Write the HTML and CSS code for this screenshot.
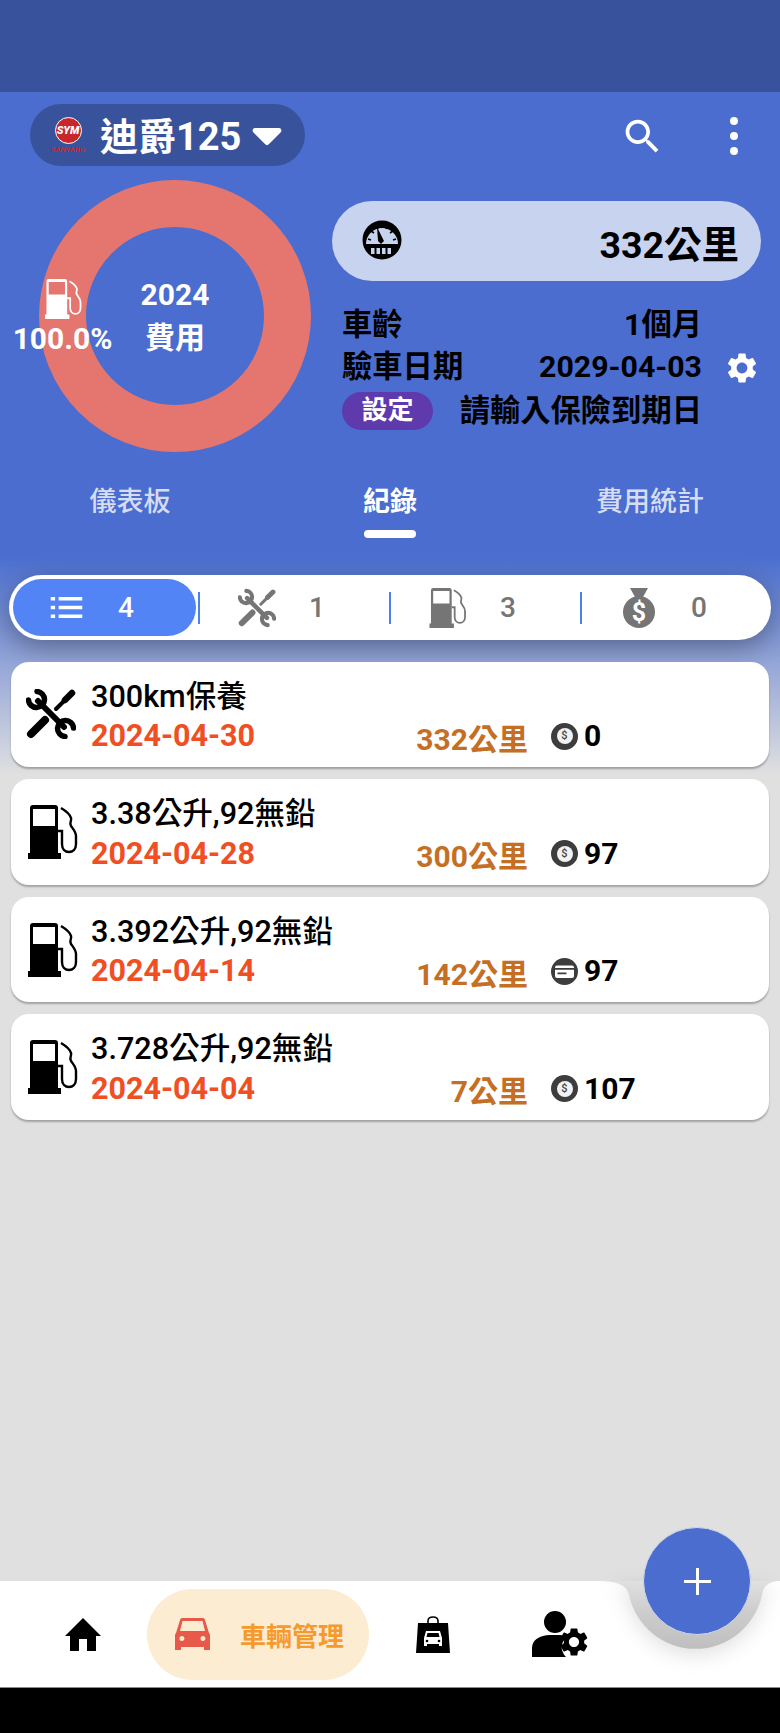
FILE: index.html
```html
<!DOCTYPE html>
<html lang="zh-Hant">
<head>
    <meta charset="utf-8" />
    <title>車輛管理</title>
    <link rel="stylesheet" href="styles.css">
</head>
<body>

<svg class="defs" width="0" height="0">
    <symbol id="i-fuel" viewBox="0 0 50 54">
        <path fill-rule="evenodd" d="M5 0h22a3 3 0 0 1 3 3v45h3v6H0v-6h2V3a3 3 0 0 1 3-3zM5 4v17h22V4z"/>
        <path fill="none" stroke="currentColor" stroke-width="2.4" d="M33 3c5 3 9 6 10 10 1 3-2 4 0 8 2 3 5 6 5 10v8c0 5-3 8-7 8s-7-3-7-8V26h-4"/>
    </symbol>
    <symbol id="i-tools" viewBox="0 0 50 50">
        <g fill="none" stroke="currentColor" stroke-linecap="round">
            <path stroke-width="6" d="M12 12l26 26"/>
            <path stroke-width="5.5" d="M11 2.500A8 8 0 1 1 2.500 11M39 47.500A8 8 0 1 1 47.500 39"/>
            <path stroke-width="8" d="M5 45l14-14"/>
            <path stroke-width="4" d="M30 20l9-9"/>
            <path stroke-width="6.500" d="M39 11l7-7"/>
        </g>
    </symbol>
    <symbol id="i-card" viewBox="0 0 27 27">
        <circle cx="13.500" cy="13.500" r="13.500" fill="#3d3d3d"/>
        <rect x="4" y="7.500" width="19" height="12.500" rx="2" fill="#fff"/>
        <path fill="#3d3d3d" d="M4 10h19v1.800H4zM6.500 14.500h9v1.700h-9z"/>
    </symbol>
    <symbol id="i-gear" viewBox="0 0 24 24">
        <path d="M19.14 12.94c.04-.3.06-.61.06-.94 0-.32-.02-.64-.07-.94l2.03-1.58c.18-.14.23-.41.12-.61l-1.92-3.32c-.12-.22-.37-.29-.59-.22l-2.39.96c-.5-.38-1.03-.7-1.62-.94l-.36-2.54c-.04-.24-.24-.41-.48-.41h-3.84c-.24 0-.43.17-.47.41l-.36 2.54c-.59.24-1.13.57-1.62.94l-2.39-.96c-.22-.08-.47 0-.59.22L2.74 8.87c-.12.21-.08.47.12.61l2.03 1.58c-.05.3-.09.63-.09.94s.02.64.07.94l-2.03 1.58c-.18.14-.23.41-.12.61l1.92 3.32c.12.22.37.29.59.22l2.39-.96c.5.38 1.03.7 1.62.94l.36 2.54c.05.24.24.41.48.41h3.84c.24 0 .44-.17.47-.41l.36-2.54c.59-.24 1.13-.56 1.62-.94l2.39.96c.22.08.47 0 .59-.22l1.92-3.32c.12-.22.07-.47-.12-.61l-2.01-1.58zM12 15.600c-1.980 0-3.600-1.620-3.600-3.600s1.620-3.600 3.600-3.600 3.600 1.620 3.600 3.600-1.620 3.600-3.600 3.600z"/>
    </symbol>
</svg>

<div class="status"></div>

<header class="top">
    <div class="toolbar">
        <div class="bike">
            <div class="logo">
                <span class="logo-ball">SYM</span>
                <span class="logo-name">SANYANG</span>
            </div>
            <span class="bike-name">迪爵125</span>
            <svg class="caret" viewBox="0 0 30 19"><path d="M3 1h24c2 0 3 2 2 4L17 17c-1 1.500-3 1.500-4 0L1 5C0 3 1 1 3 1z"/></svg>
        </div>
        <svg class="search" viewBox="0 0 24 24"><path d="M15.5 14h-.79l-.28-.27C15.41 12.59 16 11.11 16 9.5 16 5.91 13.09 3 9.5 3S3 5.91 3 9.5 5.91 16 9.5 16c1.61 0 3.09-.59 4.23-1.57l.27.28v.79l5 4.99L20.49 19l-4.99-5zm-6 0C7.010 14 5 11.990 5 9.500S7.010 5 9.500 5 14 7.010 14 9.500 11.990 14 9.500 14z"/></svg>
        <div class="more"><i></i><i></i><i></i></div>
    </div>

    <div class="summary">
        <div class="donut">
            <div class="donut-year">2024</div>
            <div class="donut-year">費用</div>
            <div class="donut-part">
                <svg class="donut-fuel"><use href="#i-fuel"/></svg>
                <span>100.0%</span>
            </div>
        </div>
        <div class="facts">
            <div class="odo">
                <svg class="gauge" viewBox="0 0 40 40">
                    <circle cx="20" cy="20" r="19.500"/>
                    <path fill="#c8d3ef" d="M4 24a16 16 0 1 1 32 0l-1 1H5z"/>
                    <path fill="none" stroke="#000" stroke-width="1.600" d="M6 19l3 1M9 11l3 2M15 6l1 3M25 6l-1 3M31 11l-3 2M34 19l-3 1"/>
                    <path d="M15 7l7 14-3 3-3-3z"/>
                    <path fill="#000" d="M4 24h32v2H4z"/>
                    <path fill="#c8d3ef" d="M9 28h3.500v6H9zM14.500 28H18v6h-3.500zM20 28h3.500v6H20zM25.500 28H29v6h-3.500z"/>
                </svg>
                <span>332公里</span>
            </div>
            <div class="info-wrap">
                <div class="info">
                    <div class="info-row"><span>車齡</span><span>1個月</span></div>
                    <div class="info-row"><span>驗車日期</span><span>2029-04-03</span></div>
                    <div class="info-row info-last"><span class="chip">設定</span><span>請輸入保險到期日</span></div>
                </div>
                <svg class="info-gear"><use href="#i-gear"/></svg>
            </div>
        </div>
    </div>

    <nav class="tabs">
        <div class="tab">儀表板</div>
        <div class="tab tab-on">紀錄</div>
        <div class="tab">費用統計</div>
    </nav>
</header>

<main class="main">
    <div class="seg">
        <div class="seg-cell seg-on">
            <span class="seg-icon">
                <svg class="seg-list" viewBox="0 0 36 24"><path d="M0 0h5v4H0zM9 0h27v4H9zM0 10h5v4H0zM9 10h27v4H9zM0 20h5v4H0zM9 20h27v4H9z"/></svg>
            </span>
            <b>4</b>
        </div>
        <div class="seg-cell">
            <span class="seg-icon"><svg class="seg-svg"><use href="#i-tools"/></svg></span>
            <b>1</b>
        </div>
        <div class="seg-cell">
            <span class="seg-icon"><svg class="seg-svg"><use href="#i-fuel"/></svg></span>
            <b>3</b>
        </div>
        <div class="seg-cell">
            <span class="seg-icon">
                <svg class="seg-svg" viewBox="0 0 36 40">
                    <path d="M9 0h18l-5 9h-8z"/>
                    <circle cx="18" cy="24" r="16"/>
                    <text x="18" y="33" font-size="25" font-weight="700" font-family="Roboto" fill="#fff" text-anchor="middle">$</text>
                </svg>
            </span>
            <b>0</b>
        </div>
    </div>

    <div class="list">
        <div class="rec">
            <svg class="rec-icon rec-tools"><use href="#i-tools"/></svg>
            <div class="rec-body">
                <div class="rec-title">300km保養</div>
                <div class="rec-foot">
                    <div class="rec-main"><span class="rec-date">2024-04-30</span><span class="rec-km">332公里</span></div>
                    <span class="coin"><i>$</i></span>
                    <span class="rec-cost">0</span>
                </div>
            </div>
        </div>
        <div class="rec">
            <svg class="rec-icon"><use href="#i-fuel"/></svg>
            <div class="rec-body">
                <div class="rec-title">3.38公升,92無鉛</div>
                <div class="rec-foot">
                    <div class="rec-main"><span class="rec-date">2024-04-28</span><span class="rec-km">300公里</span></div>
                    <span class="coin"><i>$</i></span>
                    <span class="rec-cost">97</span>
                </div>
            </div>
        </div>
        <div class="rec">
            <svg class="rec-icon"><use href="#i-fuel"/></svg>
            <div class="rec-body">
                <div class="rec-title">3.392公升,92無鉛</div>
                <div class="rec-foot">
                    <div class="rec-main"><span class="rec-date">2024-04-14</span><span class="rec-km">142公里</span></div>
                    <svg class="pay"><use href="#i-card"/></svg>
                    <span class="rec-cost">97</span>
                </div>
            </div>
        </div>
        <div class="rec">
            <svg class="rec-icon"><use href="#i-fuel"/></svg>
            <div class="rec-body">
                <div class="rec-title">3.728公升,92無鉛</div>
                <div class="rec-foot">
                    <div class="rec-main"><span class="rec-date">2024-04-04</span><span class="rec-km">7公里</span></div>
                    <span class="coin"><i>$</i></span>
                    <span class="rec-cost">107</span>
                </div>
            </div>
        </div>
    </div>
</main>

<footer class="nav">
    <svg class="notch" viewBox="0 0 183 68">
        <linearGradient id="notch-fill" x1="0" y1="0" x2="0" y2="1">
            <stop offset="0" stop-color="#e0e0e0"/>
            <stop offset="0.45" stop-color="#cdcdcd"/>
            <stop offset="1" stop-color="#bfbfbf"/>
        </linearGradient>
        <path fill="url(#notch-fill)" d="M0 0c20 0 30 4 32 14a68 68 0 0 0 133 0c1-9 7-14 18-14z"/>
    </svg>
    <svg class="nav-home" viewBox="0 0 36 33"><path d="M18 0l18 18h-5v15H22V21h-8v12H5V18H0z"/></svg>
    <div class="nav-pill">
        <svg class="nav-car" viewBox="0 0 35 33">
            <path fill-rule="evenodd" d="M7 0h21c1 0 2 1 2 2l4 13c1 1 1 2 1 3v14h-6v-3H6v3H0V18c0-1 0-2 1-3L5 2c0-1 1-2 2-2zM7.500 3L5 13h25L27.500 3zM7 18a2.500 2.500 0 1 0 0 5 2.500 2.500 0 0 0 0-5zm21 0a2.500 2.500 0 1 0 0 5 2.500 2.500 0 0 0 0-5z"/>
        </svg>
        <span>車輛管理</span>
    </div>
    <svg class="nav-bag" viewBox="0 0 34 37">
        <path fill="none" stroke="#000" stroke-width="1.600" d="M12 9V5c0-3 2-4 5-4s5 1 5 4v4"/>
        <path fill-rule="evenodd" d="M2 7h30l2 30H0zM10 15l-2 7v8h3v-2h12v2h3v-8l-2-7zM11.500 17h11l1 4h-13z"/>
        <circle cx="11" cy="25" r="1.300"/><circle cx="23" cy="25" r="1.300"/>
    </svg>
    <div class="nav-user">
        <svg class="user-body" viewBox="0 0 57 46">
            <ellipse cx="23" cy="11" rx="11" ry="11"/>
            <path d="M0 46v-9c0-8 8-13 18-13h10c3 0 5 1 7 2-4 3-6 8-5 13 1 3 2 5 4 7z"/>
        </svg>
        <svg class="user-gear"><use href="#i-gear"/></svg>
    </div>
    <div class="fab">
        <svg viewBox="0 0 27 27"><path d="M12 0h3v12h12v3H15v12h-3V15H0v-3h12z"/></svg>
    </div>
</footer>
<div class="sysbar"></div>

</body>
</html>
```

FILE: styles.css
```css
* { box-sizing: border-box; }
html, body { margin: 0; padding: 0; }
body { width: 780px; height: 1733px; display: flex; flex-direction: column; overflow: hidden; font-family: Roboto, "Noto Sans CJK TC", sans-serif; font-weight: 700; color: #000; background: linear-gradient(#4a6dcf 0, #4a6dcf 555px, #e0e0e0 775px); }
svg { display: block; fill: currentColor; }
.defs { position: absolute; }

.status { height: 92px; background: #38539c; flex: none; }

.top { flex: none; height: 483px; }
.toolbar { display: flex; align-items: center; padding: 12px 0 0 30px; height: 74px; }
.bike { display: flex; align-items: center; width: 275px; height: 62px; padding-left: 21px; border-radius: 31px; background: #38539c; color: #fff; }
.logo { width: 34px; display: flex; flex-direction: column; align-items: center; }
.logo-ball { width: 27px; height: 27px; border-radius: 50%; border: 1px solid #fff; background: #c8262b; font-size: 11px; line-height: 25px; text-align: center; font-style: italic; font-weight: 900; color: #fff; }
.logo-name { font-size: 7.5px; line-height: 9px; margin-top: 1px; color: #d9202a; font-weight: 500; }
.bike-name { font-size: 38px; line-height: 44px; margin-left: 15px; margin-top: 3px; }
.caret { width: 30px; height: 19px; margin-left: 11px; margin-top: 2px; }
.search { width: 45px; height: 45px; margin-left: 315px; color: #fff; margin-top: 2px; }
.more { display: flex; flex-direction: column; gap: 7px; margin-left: 65px; margin-top: 2px; }
.more i { display: block; width: 8px; height: 8px; border-radius: 50%; background: #fff; }

.summary { display: flex; margin-top: 14px; height: 272px; }
.donut { position: relative; width: 272px; height: 272px; margin-left: 39px; border: 47px solid #e4756f; border-radius: 50%; display: flex; flex-direction: column; align-items: center; justify-content: center; color: #fff; }
.donut-year { font-size: 30px; line-height: 43px; }
.donut-part { position: absolute; left: -73px; top: 52px; width: 99px; display: flex; flex-direction: column; align-items: center; font-size: 30px; line-height: 36px; white-space: nowrap; }
.donut-fuel { width: 37px; height: 40px; margin-left: 2px; margin-bottom: 2px; }

.facts { width: 429px; margin-left: 21px; padding-top: 21px; }
.odo { display: flex; align-items: center; justify-content: space-between; height: 80px; padding: 0 22px 0 30px; border-radius: 40px; background: #c8d3ef; font-size: 37.5px; }
.gauge { width: 40px; height: 40px; margin-top: -3px; }
.info-wrap { display: flex; align-items: center; margin-top: 23px; padding-left: 10px; }
.info { width: 360px; }
.info-row { display: flex; justify-content: space-between; align-items: center; height: 42px; font-size: 30.3px; line-height: 42px; white-space: nowrap; }
.info-last { margin-top: 2px; }
.chip { width: 91px; height: 38px; border-radius: 19px; background: #5e3aad; color: #fff; font-size: 26px; line-height: 36px; text-align: center; }
.info-gear { width: 36px; height: 36px; margin-left: 22px; color: #fff; }

.tabs { display: flex; margin-top: 30px; }
.tab { width: 260px; text-align: center; font-size: 27px; line-height: 40px; color: #d6ddf3; font-weight: 500; }
.tab-on { color: #fff; position: relative; font-weight: 700; }
.tab-on::after { content: ""; position: absolute; left: 104px; top: 48px; width: 52px; height: 8px; border-radius: 4px; background: #fff; }

.main { flex: 1; min-height: 0; }
.seg { display: flex; height: 65px; margin: 0 9px; padding: 4px; border-radius: 33px; background: #fff; box-shadow: 0 8px 26px rgba(0, 0, 0, 0.32); }
.seg-cell { flex: none; display: flex; align-items: center; width: 191px; height: 57px; padding-left: 37px; color: #757575; position: relative; }
.seg-cell b { font-weight: 500; font-size: 28px; margin-left: 32px; }
.seg-cell::after { content: ""; position: absolute; right: 0; top: 13px; width: 2px; height: 32px; background: #4a80f0; }
.seg-cell:last-child { flex: 1; }
.seg-cell:last-child::after { display: none; }
.seg-on { width: 187px; padding-left: 33px; color: #fff; }
.seg-on::before { content: ""; position: absolute; left: 0; top: 0; right: 4px; bottom: 0; border-radius: 29px; background: #5284f5; }
.seg-on b { position: relative; margin-left: 32px; }
.seg-icon { position: relative; width: 40px; height: 40px; display: flex; align-items: center; justify-content: center; }
.seg-list { width: 35px; height: 21px; }
.seg-svg { width: 38px; height: 40px; }

.list { display: flex; flex-direction: column; gap: 12px; padding: 21.5px 11px 0; }
.rec { display: flex; height: 105.5px; border-radius: 18px; background: #fff; box-shadow: 0 2px 2px rgba(0, 0, 0, 0.28); }
.rec-icon { flex: none; width: 50px; height: 54px; margin: 26px 0 0 17px; }
.rec-tools { width: 50px; height: 50px; margin: 27px 0 0 15px; }
.rec-tools + .rec-body { margin-left: 15px; }
.rec-body { margin-left: 13px; padding-top: 14px; }
.rec-title { font-size: 30.6px; line-height: 42px; white-space: nowrap; font-weight: 500; }
.rec-foot { display: flex; align-items: center; margin-top: -6px; }
.rec-main { display: flex; justify-content: space-between; width: 437px; align-items: center; }
.rec-date { color: #f04e23; font-size: 30.5px; line-height: 42px; }
.rec-km { color: #c56f25; font-size: 30px; line-height: 42px; margin-top: 7px; }
.pay, .coin { flex: none; width: 27px; height: 27px; margin-left: 23px; }
.coin { display: flex; align-items: center; justify-content: center; border-radius: 50%; background: #3d3d3d; }
.coin i { width: 16px; height: 16px; border-radius: 50%; background: #f2f2f2; color: #444; font-style: normal; font-weight: 500; font-size: 11px; line-height: 16px; text-align: center; }
.rec-cost { font-size: 30px; line-height: 42px; margin-left: 6px; }

.nav { position: relative; flex: none; display: flex; align-items: center; height: 107px; padding-left: 65px; background: #fff; border-bottom: 1px solid #8a8a8a; }
.notch { position: absolute; left: 597px; top: 0; width: 183px; height: 68px; filter: drop-shadow(0 6px 10px rgba(0, 0, 0, 0.12)); overflow: visible; }
.nav-home { width: 36px; height: 33px; }
.nav-pill { display: flex; align-items: center; width: 222px; height: 91px; margin-left: 46px; padding-left: 28px; border-radius: 46px; background: #fbecd2; color: #f79a2e; font-size: 26px; white-space: nowrap; }
.nav-pill span { margin-left: 30px; }
.nav-car { width: 35px; height: 33px; color: #e8594a; }
.nav-bag { width: 34px; height: 37px; margin-left: 47px; }
.nav-user { position: relative; width: 57px; height: 46px; margin-left: 82px; }
.user-body { width: 57px; height: 46px; }
.user-gear { position: absolute; left: 25px; top: 14px; width: 34px; height: 34px; }
.fab { position: absolute; left: 643px; top: -54px; width: 108px; height: 108px; border-radius: 50%; background: #4a6dcf; border: 1px solid #d8d8e6; color: #fff; display: flex; align-items: center; justify-content: center; }
.fab svg { width: 27px; height: 27px; }

.sysbar { flex: none; height: 45px; background: #000; }
```
